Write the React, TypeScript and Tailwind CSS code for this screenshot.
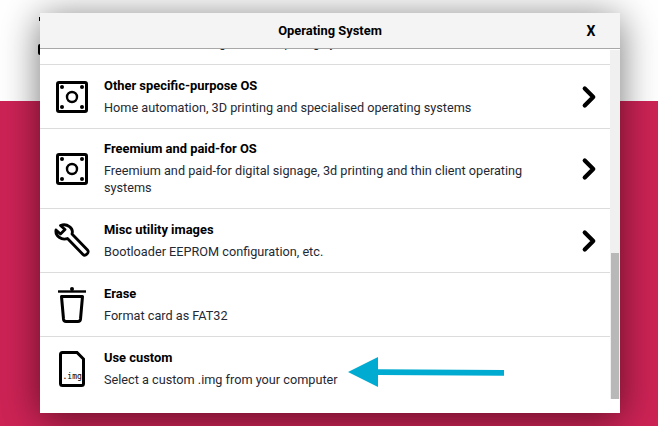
import { ChevronRight } from "lucide-react"

function BoardIcon() {
  return (
    <svg width="32" height="32" viewBox="0 0 32 32" fill="none">
      <rect x="1.5" y="1.5" width="29" height="29" rx="1.5" stroke="black" strokeWidth="3" />
      <circle cx="16" cy="16" r="5" stroke="black" strokeWidth="2.4" />
      <circle cx="6" cy="6" r="2" fill="black" />
      <circle cx="26" cy="6" r="2" fill="black" />
      <circle cx="6" cy="26" r="2" fill="black" />
      <circle cx="26" cy="26" r="2" fill="black" />
    </svg>
  )
}

function WrenchIcon() {
  return (
    <svg width="36" height="36" viewBox="0 0 36 36" fill="none">
      <path
        d="M6.5 2.5 C13 0 20 5 18 11 L33.5 27 C34.5 28 34.5 29.5 33 31 C31.5 32.5 30 32.5 29 31.5 L13.5 15.5 C7.5 17.5 1 13 2 7 L6.5 11 L11 6.5 Z"
        stroke="black"
        strokeWidth="2.8"
        strokeLinejoin="round"
      />
    </svg>
  )
}

function TrashIcon() {
  return (
    <svg width="28" height="36" viewBox="0 0 28 36" fill="none">
      <path d="M0 4.5 H28" stroke="black" strokeWidth="2.4" />
      <circle cx="14" cy="2" r="2" fill="black" />
      <path
        d="M3.5 9.5 H24.5 L22.5 32 C22.3 33.7 21.5 34.5 20 34.5 H8 C6.5 34.5 5.7 33.7 5.5 32 Z"
        stroke="black"
        strokeWidth="3"
        strokeLinejoin="round"
      />
    </svg>
  )
}

function FileIcon() {
  return (
    <div className="relative h-[36px] w-[26px]">
      <svg width="26" height="36" viewBox="0 0 26 36" fill="none">
        <path
          d="M3.5 1.5 H18 L24.5 8 V32.5 C24.5 33.7 23.7 34.5 22.5 34.5 H3.5 C2.3 34.5 1.5 33.7 1.5 32.5 V3.5 C1.5 2.3 2.3 1.5 3.5 1.5 Z"
          stroke="black"
          strokeWidth="3"
        />
      </svg>
      <span className="absolute left-[3.5px] top-[20px] font-['DejaVu_Sans_Mono',monospace] text-[8px] leading-[12px] text-black">
        .img
      </span>
    </div>
  )
}

function Row({
  icon,
  title,
  desc,
  chevron,
  last,
}: {
  icon: React.ReactNode
  title: string
  desc: string
  chevron?: boolean
  last?: boolean
}) {
  return (
    <div className={`flex h-[64px] items-center ${last ? "" : "border-b border-[#dcdcdc]"}`}>
      <div className="flex w-[64px] shrink-0 justify-center">{icon}</div>
      <div className="min-w-0 flex-1 pt-[1px]">
        <p className="text-[12.9px] font-bold leading-[16px] text-black">{title}</p>
        <p className="mt-[5px] text-[12.7px] leading-[18px] text-[#1f2933]">{desc}</p>
      </div>
      <div className="flex w-[43px] shrink-0 justify-center">
        {chevron && <ChevronRight size={34} strokeWidth={3} color="black" />}
      </div>
    </div>
  )
}

export default function App() {
  return (
    <div className="relative flex h-[426px] w-[658px] flex-col overflow-hidden font-['Roboto',sans-serif]">
      <div className="h-[101px] bg-white" />
      <div className="flex-1 bg-[#cd2355]" />

      {/* Restos de la pagina detras del dialogo */}
      <div className="absolute left-[39px] top-[17px] h-[4px] w-[1px] bg-black" />
      <div className="absolute left-[38px] top-[44px] h-[11px] w-[2px] rounded-l-full bg-black" />

      {/* Dialogo */}
      <div className="absolute left-[40px] top-[13px] flex h-[400px] w-[580px] flex-col bg-white shadow-[0_5px_36px_rgba(0,0,0,0.55)]">
        <div className="grid h-[36px] shrink-0 grid-cols-[58px_1fr_58px] items-center border-b border-[#a8a8a8] bg-[#f4f4f4] pt-[1px]">
          <span />
          <span className="text-center text-[12.9px] font-bold text-black">Operating System</span>
          <span className="text-center text-[14px] font-bold text-black">X</span>
        </div>

        <div className="flex min-h-0 flex-1">
          <div className="min-w-0 flex-1 overflow-hidden">
            <div className="flex h-[16px] flex-col justify-end overflow-hidden border-b border-[#dcdcdc]">
              <p className="shrink-0 -translate-y-[12px] whitespace-nowrap pl-[64px] text-[12.7px] leading-[18px] text-[#1f2933]">
                Emulators for running retro-computing systems
              </p>
            </div>
            <Row
              icon={<BoardIcon />}
              title="Other specific-purpose OS"
              desc="Home automation, 3D printing and specialised operating systems"
              chevron
            />
            <div className="flex h-[80px] items-center border-b border-[#dcdcdc]">
              <div className="flex w-[64px] shrink-0 justify-center">
                <BoardIcon />
              </div>
              <div className="min-w-0 flex-1 pr-[20px]">
                <p className="text-[12.9px] font-bold leading-[16px] text-black">Freemium and paid-for OS</p>
                <p className="mt-[5px] text-[12.7px] leading-[17px] text-[#1f2933]">
                  Freemium and paid-for digital signage, 3d printing and thin client operating systems
                </p>
              </div>
              <div className="flex w-[43px] shrink-0 justify-center">
                <ChevronRight size={34} strokeWidth={3} color="black" />
              </div>
            </div>
            <Row
              icon={<WrenchIcon />}
              title="Misc utility images"
              desc="Bootloader EEPROM configuration, etc."
              chevron
            />
            <Row icon={<TrashIcon />} title="Erase" desc="Format card as FAT32" />
            <Row icon={<FileIcon />} title="Use custom" desc="Select a custom .img from your computer" last />
          </div>

          <div className="mt-[1px] flex h-[349px] w-[10px] shrink-0 flex-col bg-[#f0f0f0] pl-[1px] pr-[1px] pt-[203px]">
            <div className="flex-1 bg-[#b8b8b8]" />
          </div>
        </div>
      </div>

      {/* Flecha de anotacion */}
      <svg className="absolute left-[340px] top-[350px]" width="170" height="50" viewBox="0 0 170 50">
        <path d="M8 22 L38 7 V19.3 L164 20 V25.7 L38 25 V37 Z" fill="#00abd1" />
      </svg>
    </div>
  )
}
